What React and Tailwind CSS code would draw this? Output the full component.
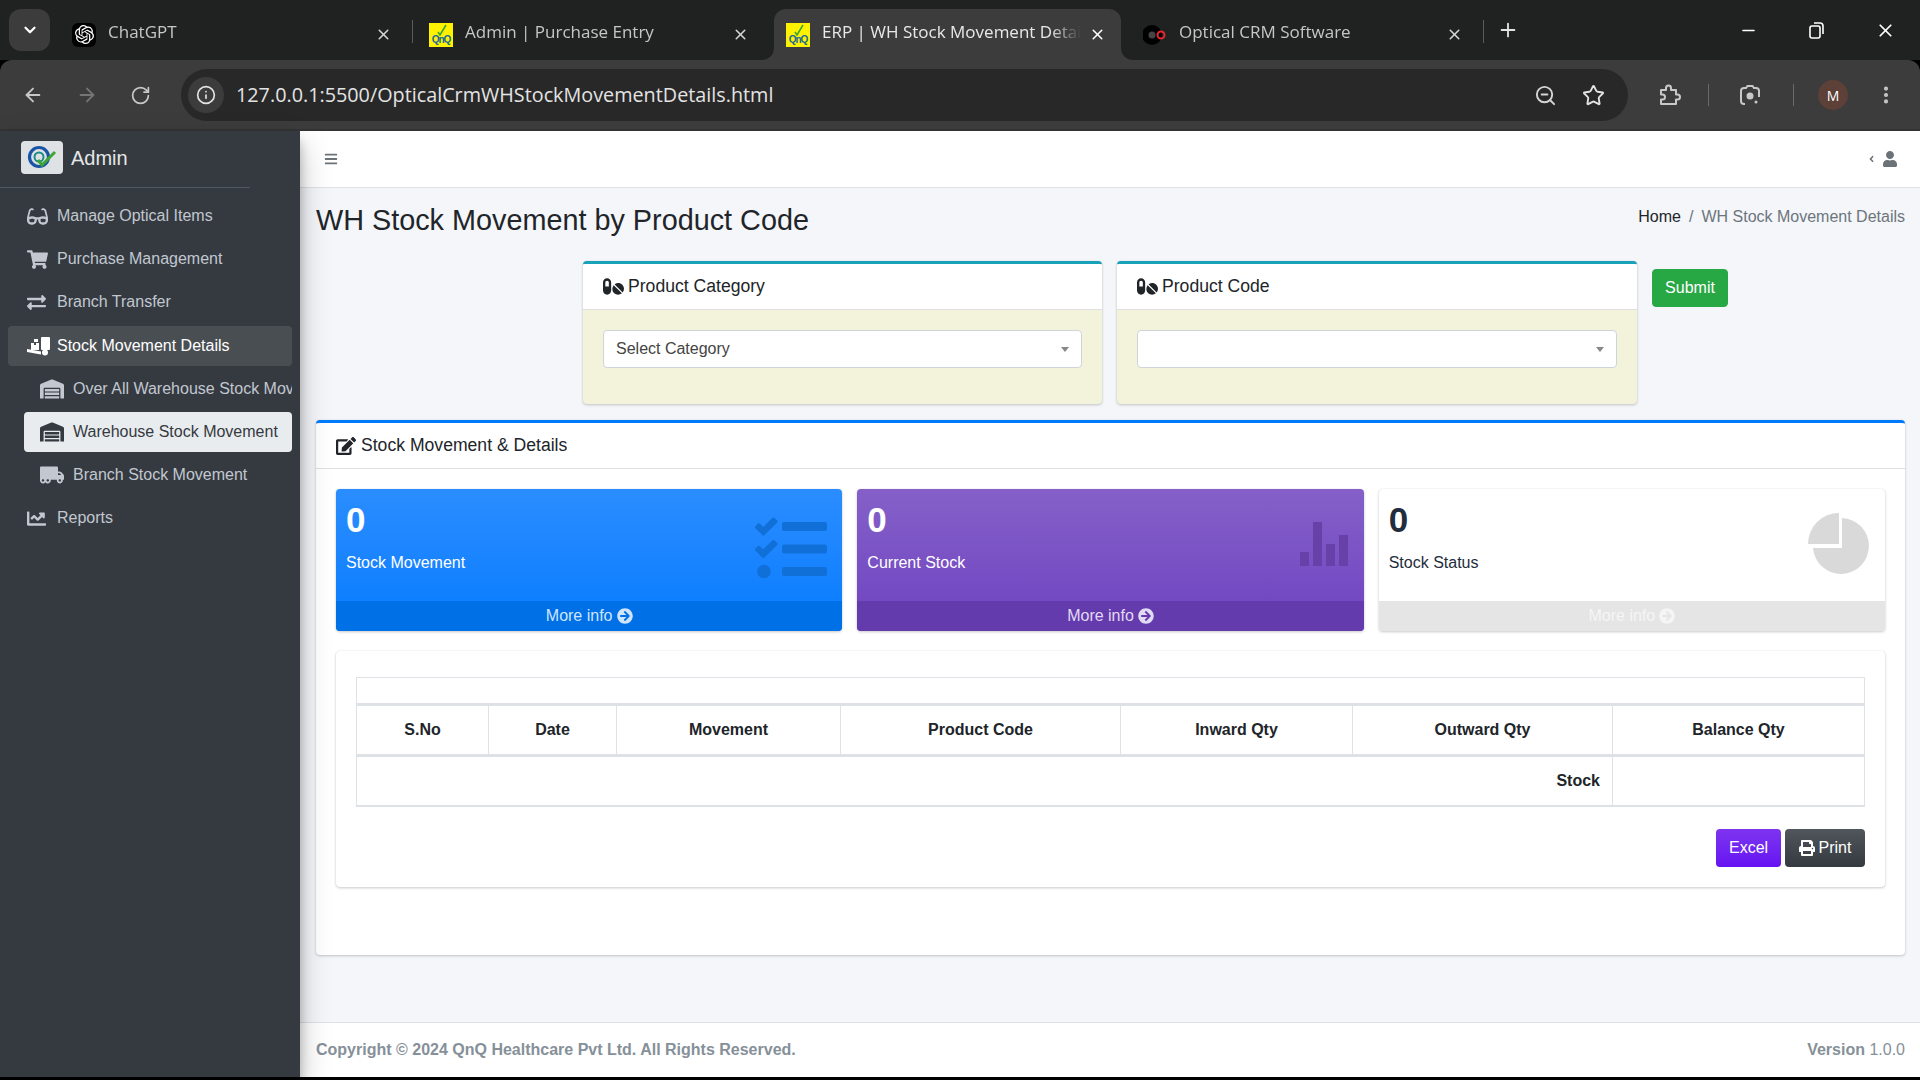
import { ArrowLeft, ArrowRight, ChevronDown, EllipsisVertical, Info, Minus, Plus, RotateCw, Star, X, ZoomOut } from "lucide-react";
import {
    FaAngleLeft,
    FaArrowCircleRight,
    FaBars,
    FaChartLine,
    FaEdit,
    FaExchangeAlt,
    FaGlasses,
    FaPills,
    FaPrint,
    FaShoppingCart,
    FaTasks,
    FaTruckMoving,
    FaUser,
    FaWarehouse,
} from "react-icons/fa";
import { SiOpenai } from "react-icons/si";

const QnqFavicon = () => (
    <div className="relative w-6 h-6 bg-[#fff200] flex items-end justify-center overflow-hidden shrink-0">
        <span className="text-[10px] leading-[15px] font-bold text-[#16689c] tracking-[-1px]">QnQ</span>
        <svg className="absolute left-[8px] top-[1px] w-[10px] h-[12px]" viewBox="0 0 10 12" fill="none">
            <path d="M1 8l2 3 6-10" stroke="#3fa535" strokeWidth="1.6" />
        </svg>
    </div>
);

const ChatgptFavicon = () => (
    <div className="w-6 h-6 bg-black rounded-md flex items-center justify-center shrink-0">
        <SiOpenai className="w-[19px] h-[19px] text-white" />
    </div>
);

const CrmFavicon = () => (
    <svg className="w-6 h-6 shrink-0" viewBox="0 0 24 24">
        <circle cx="9" cy="12" r="10" fill="#000" />
        <circle cx="9" cy="12" r="3.5" fill="#444" />
        <circle cx="18" cy="12" r="3.5" fill="none" stroke="#e8262c" strokeWidth="2" />
    </svg>
);

const DollyIcon = () => (
    <svg className="w-[23px] h-[19px]" viewBox="0 0 23 19" fill="currentColor">
        <path d="M4 6h3v2h2V6h3v7H4z" />
        <path d="M7 2h4v3H7z" />
        <rect x="14" y="0" width="9" height="13" rx="1" />
        <path d="M0 12l14 2.5v3L0 15z" />
        <circle cx="18" cy="15.5" r="3" />
    </svg>
);

const BrowserTab = ({ icon, title, active, divider }) => (
    <div className="relative w-[357px] pr-[10px] h-[51px] shrink-0">
        <div className={`relative h-full pl-[12px] pr-[15px] flex items-center rounded-t-xl ${active ? "bg-[#3c3c3c]" : ""}`}>
            {active && (
                <>
                    <div className="absolute left-[-12px] bottom-0 w-3 h-3 bg-[#3c3c3c]">
                        <div className="w-3 h-3 bg-[#202221] rounded-br-xl"></div>
                    </div>
                    <div className="absolute right-[-12px] bottom-0 w-3 h-3 bg-[#3c3c3c]">
                        <div className="w-3 h-3 bg-[#202221] rounded-bl-xl"></div>
                    </div>
                </>
            )}
            {icon}
            <p className={`ml-3 -mt-[5px] flex-1 whitespace-nowrap overflow-hidden text-[17px] font-['Open_Sans',sans-serif] [mask-image:linear-gradient(to_right,black_88%,transparent)] ${active ? "text-[#e8e8e8]" : "text-[#c4c7c5]"}`}>
                {title}
            </p>
            <X className={`w-[17px] h-[17px] ml-2 shrink-0 ${active ? "text-white" : "text-[#d5d5d5]"}`} strokeWidth={2.2} />
        </div>
        {divider && <div className="absolute right-[4px] top-[11px] w-px h-[23px] bg-[#5a5c5b]"></div>}
    </div>
);

const TabStrip = () => (
    <div className="h-[60px] bg-[#202221] flex pt-[9px] pl-[9px] shrink-0">
        <div className="w-[41px] h-[42px] bg-[#3c3c3c] rounded-xl flex items-center justify-center mr-[10px] shrink-0">
            <ChevronDown className="w-[18px] h-[18px] text-white" strokeWidth={3} />
        </div>
        <BrowserTab icon={<ChatgptFavicon />} title="ChatGPT" divider />
        <BrowserTab icon={<QnqFavicon />} title="Admin | Purchase Entry" />
        <BrowserTab icon={<QnqFavicon />} title="ERP | WH Stock Movement Details" active />
        <BrowserTab icon={<CrmFavicon />} title="Optical CRM Software" divider />
        <div className="w-[40px] h-[42px] flex items-center justify-center shrink-0">
            <Plus className="w-[22px] h-[22px] text-[#e3e3e3]" strokeWidth={2} />
        </div>
        <div className="flex-1"></div>
        <div className="flex h-[42px] items-center text-white pr-[24px] gap-[49px]">
            <Minus className="w-[19px] h-[19px]" strokeWidth={2} />
            <svg className="w-[19px] h-[19px]" viewBox="0 0 19 19" fill="none" stroke="currentColor" strokeWidth="1.6">
                <rect x="3" y="5" width="10" height="12" rx="2" />
                <path d="M7 2h6a3 3 0 0 1 3 3v8" />
            </svg>
            <X className="w-[21px] h-[21px]" strokeWidth={2} />
        </div>
    </div>
);

const Toolbar = () => (
    <div className="h-[71px] bg-[#3c3c3c] rounded-t-xl flex items-start pt-[9px] shrink-0 border-b-2 border-b-[#333333]">
        <div className="w-[181px] h-[52px] flex items-center pl-[22px] gap-[32px] shrink-0">
            <ArrowLeft className="w-[22px] h-[22px] text-[#c8c8c8]" strokeWidth={2} />
            <ArrowRight className="w-[22px] h-[22px] text-[#757575]" strokeWidth={2} />
            <RotateCw className="w-[21px] h-[21px] text-[#c8c8c8]" strokeWidth={2} />
        </div>
        <div className="w-[1447px] h-[52px] rounded-full bg-[#282828] flex items-center pl-[7px] pr-[23px] shrink-0">
            <div className="w-[36px] h-[36px] rounded-full bg-[#3c3c3c] flex items-center justify-center">
                <Info className="w-[20px] h-[20px] text-[#e3e3e3]" strokeWidth={2} />
            </div>
            <p className="ml-[12px] flex-1 text-[19.8px] text-[#e3e3e3] font-['Open_Sans',sans-serif]">127.0.0.1:5500/OpticalCrmWHStockMovementDetails.html</p>
            <ZoomOut className="w-[23px] h-[23px] text-[#d5d5d5]" strokeWidth={2} />
            <Star className="w-[23px] h-[23px] ml-[25px] text-[#e3e3e3]" strokeWidth={2} />
        </div>
        <div className="flex-1 h-[52px] flex items-center pl-[29px]">
            <svg className="w-[24px] h-[24px] text-[#c8c8c8]" viewBox="0 0 24 24" fill="none" stroke="currentColor" strokeWidth="2" strokeLinejoin="round">
                <path d="M4 7h5V5a2.5 2.5 0 0 1 5 0v2h5v4.5h1.5a2.5 2.5 0 0 1 0 5H19V21H4v-4.5h1.5a2.5 2.5 0 0 0 0-5H4z" />
            </svg>
            <div className="ml-[27px] w-px h-[22px] bg-[#6a6a6a]"></div>
            <svg className="ml-[29px] w-[24px] h-[24px] text-[#c8c8c8]" viewBox="0 0 24 24" fill="none" stroke="currentColor" strokeWidth="2">
                <path d="M7 21H6a3 3 0 0 1-3-3V8a3 3 0 0 1 3-3h2l1.5-2h5L16 5h2a3 3 0 0 1 3 3v6" />
                <circle cx="12" cy="13" r="2.5" fill="currentColor" />
                <circle cx="18" cy="19" r="1.5" fill="currentColor" stroke="none" />
            </svg>
            <div className="ml-[31px] w-px h-[22px] bg-[#6a6a6a]"></div>
            <div className="ml-[24px] w-[30px] h-[30px] rounded-full bg-[#5d4037] flex items-center justify-center text-[14px] text-white font-['Open_Sans',sans-serif]">M</div>
            <EllipsisVertical className="ml-[27px] w-[22px] h-[22px] text-[#c8c8c8]" strokeWidth={2.5} />
        </div>
    </div>
);

const SideItem = ({ icon, label, sub, state }) => (
    <div
        className={`h-10 flex items-center rounded overflow-hidden whitespace-nowrap ${sub ? "ml-6 pl-4" : "ml-2 pl-[19px]"} ${
            state === "open" ? "bg-[#494e53] text-white mt-[1px]" : state === "active" ? "bg-[#e9ecef] text-[#343a40]" : "text-[#c2c7d0]"
        }`}
    >
        <span className={`flex shrink-0 ${sub ? "w-[25px] text-[24px]" : "w-[24px] text-[21px]"}`}>{icon}</span>
        <span className={sub ? "ml-[8px]" : "ml-[6px]"}>{label}</span>
    </div>
);

const Sidebar = () => (
    <aside className="w-[300px] h-full bg-[#343a40] shrink-0 shadow-[0_14px_28px_rgba(0,0,0,0.25),0_10px_10px_rgba(0,0,0,0.22)] z-10">
        <div className="h-[57px] w-[250px] border-b border-b-[#4f5962] flex items-start pt-[10px] pl-[21px]">
            <div className="w-[42px] h-[33px] bg-[#dfe2e4] rounded flex items-center justify-center">
                <svg className="w-[32px] h-[28px]" viewBox="0 0 32 28" fill="none">
                    <circle cx="13" cy="13" r="9.5" stroke="#1a55a5" strokeWidth="3.2" />
                    <circle cx="13" cy="13" r="4.5" stroke="#1c8a86" strokeWidth="2" />
                    <path d="M12 16l4 5 13-13" stroke="#3fa535" strokeWidth="3" />
                </svg>
            </div>
            <span className="ml-[8px] text-[20px] leading-[35px] text-[#e4e6e8]">Admin</span>
        </div>
        <nav className="w-[292px] pt-[8px] flex flex-col gap-[3px] text-[16px]">
            <SideItem icon={<FaGlasses />} label="Manage Optical Items" />
            <SideItem icon={<FaShoppingCart />} label="Purchase Management" />
            <SideItem icon={<FaExchangeAlt className="w-[19px]" />} label="Branch Transfer" />
            <SideItem icon={<DollyIcon />} label="Stock Movement Details" state="open" />
            <SideItem sub icon={<FaWarehouse />} label="Over All Warehouse Stock Movement" />
            <SideItem sub icon={<FaWarehouse />} label="Warehouse Stock Movement" state="active" />
            <SideItem sub icon={<FaTruckMoving />} label="Branch Stock Movement" />
            <SideItem icon={<FaChartLine className="w-[19px]" />} label="Reports" />
        </nav>
    </aside>
);

const FilterCard = ({ title, value, width }) => (
    <div className={`${width} h-[143px] rounded border-t-[3px] border-t-[#17a2b8] bg-[#f3f3dc] shadow-[0_0_1px_rgba(0,0,0,0.125),0_1px_3px_rgba(0,0,0,0.2)] overflow-hidden`}>
        <div className="h-[46px] bg-white border-b border-b-[rgba(0,0,0,0.125)] flex items-center pl-5 text-[17.6px] text-[#212529]">
            <FaPills className="w-[21px] h-[21px] mr-[4px]" />
            {title}
        </div>
        <div className="px-5 pt-5">
            <div className="h-[38px] bg-white border border-[#ced4da] rounded flex items-center pl-3 pr-[12px] text-[16px] text-[#444444]">
                <span className="flex-1">{value}</span>
                <span className="w-0 h-0 border-x-4 border-x-transparent border-t-[5px] border-t-[#888888]"></span>
            </div>
        </div>
    </div>
);

const StatBox = ({ value, label, icon, boxClass, footClass, light }) => (
    <div className={`relative flex-1 h-[142px] rounded flex flex-col overflow-hidden shadow-[0_0_1px_rgba(0,0,0,0.125),0_1px_3px_rgba(0,0,0,0.2)] ${boxClass}`}>
        <div className={`flex-1 pl-[10px] pt-[10px] ${light ? "text-[#1f2d3d]" : "text-white"}`}>
            <p className="text-[35px] leading-[42px] font-bold">{value}</p>
            <p className="mt-[10px] text-[16px] leading-6">{label}</p>
        </div>
        <div className="absolute right-[15px] top-[24px]">{icon}</div>
        <div className={`h-[30px] flex items-center justify-center text-[16px] gap-1 ${footClass}`}>
            More info <FaArrowCircleRight className="w-[16px] h-[16px]" />
        </div>
    </div>
);

const headers = [
    ["S.No", "w-[132px]"],
    ["Date", "w-[128px]"],
    ["Movement", "w-[224px]"],
    ["Product Code", "w-[280px]"],
    ["Inward Qty", "w-[232px]"],
    ["Outward Qty", "w-[260px]"],
    ["Balance Qty", "w-[252px]"],
];

const StockTable = () => (
    <table className="w-[1508px] table-fixed border-collapse border border-[#dee2e6] text-[16px] text-[#212529]">
        <colgroup>
            {headers.map(([name, width]) => (
                <col key={name} className={width} />
            ))}
        </colgroup>
        <thead>
            <tr className="h-[27px]">
                <th colSpan={7} className="border-b-[3px] border-b-[#dee2e6]"></th>
            </tr>
            <tr className="h-[51px]">
                {headers.map(([name]) => (
                    <th key={name} className="border-x border-x-[#dee2e6] border-b-[3px] border-b-[#dee2e6] font-bold text-center">
                        {name}
                    </th>
                ))}
            </tr>
        </thead>
        <tbody>
            <tr className="h-[50px]">
                <td colSpan={6} className="border-b-2 border-b-[#dee2e6] text-right font-bold pr-3">Stock</td>
                <td className="border-l border-l-[#dee2e6] border-b-2 border-b-[#dee2e6]"></td>
            </tr>
        </tbody>
    </table>
);

const App = () => (
    <div className="w-full h-[1080px] overflow-hidden flex flex-col bg-black font-['Liberation_Sans',Arial,sans-serif]">
        <TabStrip />
        <Toolbar />
        <div className="h-[946px] flex shrink-0">
            <Sidebar />
            <div className="flex-1 h-full bg-[#f4f6f9] flex flex-col">
                <div className="h-[57px] bg-white border-b border-b-[#dee2e6] flex items-center pl-[24px] pr-[24px] text-[#6b7278] shrink-0">
                    <FaBars className="w-[14px] h-[14px]" />
                    <div className="flex-1"></div>
                    <FaAngleLeft className="w-[7px] h-[10px] mr-[8px]" />
                    <FaUser className="w-[14px] h-[16px]" />
                </div>
                <div className="flex-1 pl-[16px] pr-[16px]">
                    <div className="flex justify-between h-[73px] pt-[15px]">
                        <h1 className="text-[28.8px] leading-[34px] text-[#212529]">WH Stock Movement by Product Code</h1>
                        <p className="text-[16px] leading-[24px] pt-[2px]">
                            <span className="text-[#212529]">Home</span>
                            <span className="text-[#6c757d] mx-2">/</span>
                            <span className="text-[#6c757d]">WH Stock Movement Details</span>
                        </p>
                    </div>
                    <div className="flex pl-[267px] gap-[15px]">
                        <FilterCard width="w-[519px]" title="Product Category" value="Select Category" />
                        <FilterCard width="w-[520px]" title="Product Code" value="" />
                        <button className="mt-2 w-[76px] h-[38px] bg-[#28a745] border border-[#28a745] rounded text-white text-[16px]">Submit</button>
                    </div>
                    <div className="mt-4 h-[535px] rounded bg-white border-t-[3px] border-t-[#007bff] shadow-[0_0_1px_rgba(0,0,0,0.125),0_1px_3px_rgba(0,0,0,0.2)]">
                        <div className="h-[46px] border-b border-b-[rgba(0,0,0,0.125)] flex items-center pl-5 text-[17.6px] text-[#212529]">
                            <FaEdit className="w-[20px] h-[20px] mr-[5px]" />
                            Stock Movement &amp; Details
                        </div>
                        <div className="px-5 pt-5">
                            <div className="flex gap-[15px]">
                                <StatBox
                                    value="0"
                                    label="Stock Movement"
                                    boxClass="bg-gradient-to-b from-[#2a8dff] to-[#007bff]"
                                    footClass="bg-[#0070e6] text-[#cfe5ff]"
                                    icon={<FaTasks className="w-[72px] h-[72px] text-[#1170d8]" />}
                                />
                                <StatBox
                                    value="0"
                                    label="Current Stock"
                                    boxClass="bg-gradient-to-b from-[#8560c8] to-[#6f42c1]"
                                    footClass="bg-[#643bad] text-[#e2d9f3]"
                                    icon={
                                        <svg className="w-[49px] h-[44px] mt-[9px] text-[#6741a8]" viewBox="0 0 49 44" fill="currentColor">
                                            <rect x="0" y="30" width="9" height="14" />
                                            <rect x="13" y="0" width="9" height="44" />
                                            <rect x="26" y="22" width="9" height="22" />
                                            <rect x="39" y="13" width="9" height="31" />
                                        </svg>
                                    }
                                />
                                <StatBox
                                    value="0"
                                    label="Stock Status"
                                    light
                                    boxClass="bg-white"
                                    footClass="bg-[#e5e5e5] text-[#f5f5f5]"
                                    icon={
                                        <svg className="w-[62px] h-[62px] text-[#d9d9d9]" viewBox="0 0 62 62" fill="currentColor">
                                            <path d="M0 31A31 31 0 0 1 31 0V31Z" />
                                            <path d="M34 5A28 28 0 1 1 5 35H34Z" />
                                        </svg>
                                    }
                                />
                            </div>
                            <div className="mt-5 h-[236px] rounded bg-white shadow-[0_0_1px_rgba(0,0,0,0.125),0_1px_3px_rgba(0,0,0,0.2)] pt-[26px] px-[20px]">
                                <StockTable />
                                <div className="mt-[22px] flex justify-end gap-[4px]">
                                    <button className="w-[65px] h-[38px] rounded bg-gradient-to-b from-[#7e33f0] to-[#6610f2] text-white text-[16px]">Excel</button>
                                    <button className="w-[80px] h-[38px] rounded bg-gradient-to-b from-[#50565c] to-[#343a40] text-white text-[16px] flex items-center justify-center gap-1">
                                        <FaPrint className="w-[16px] h-[16px]" />
                                        Print
                                    </button>
                                </div>
                            </div>
                        </div>
                    </div>
                </div>
                <div className="h-[55px] bg-white border-t border-t-[#dee2e6] flex items-center justify-between pl-[16px] pr-[16px] text-[16px] text-[#869099] font-bold shrink-0">
                    <span>Copyright © 2024 QnQ Healthcare Pvt Ltd. All Rights Reserved.</span>
                    <span>
                        Version <span className="font-normal">1.0.0</span>
                    </span>
                </div>
            </div>
        </div>
    </div>
);

export default App;
